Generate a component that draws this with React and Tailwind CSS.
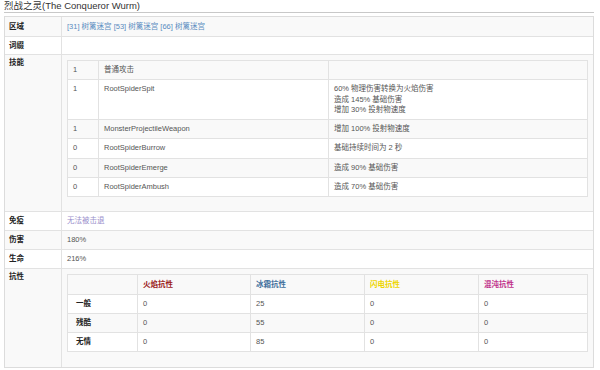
import React from "react";

const FONT = "font-['Liberation_Sans','Noto_Sans_CJK_SC',sans-serif]";

const skills = [
  { lv: "1", name: "普通攻击", desc: [], h: "h-[19px]" },
  { lv: "1", name: "RootSpiderSpit", desc: ["60% 物理伤害转换为火焰伤害", "造成 145% 基础伤害", "增加 30% 投射物速度"], h: "h-[40px]" },
  { lv: "1", name: "MonsterProjectileWeapon", desc: ["增加 100% 投射物速度"], h: "h-[19px]" },
  { lv: "0", name: "RootSpiderBurrow", desc: ["基础持续时间为 2 秒"], h: "h-[20px]" },
  { lv: "0", name: "RootSpiderEmerge", desc: ["造成 90% 基础伤害"], h: "h-[19px]" },
  { lv: "0", name: "RootSpiderAmbush", desc: ["造成 70% 基础伤害"], h: "h-[18px]" },
];

const resists = [
  { label: "一般", v: ["0", "25", "0", "0"], h: "h-[19px]" },
  { label: "残酷", v: ["0", "55", "0", "0"], h: "h-[19px]" },
  { label: "无情", v: ["0", "85", "0", "0"], h: "h-[18px]" },
];

function OuterRow({ label, children, gray, last, h = "", padClass = "py-[5px]", labelPad }) {
  return (
    <div className={`grid grid-cols-[57px_1fr] overflow-hidden ${h} ${last ? "" : "border-b border-[#e2e2e2]"} ${gray ? "bg-[#f9f9f9]" : "bg-white"}`}>
      <div className={`border-r border-[#e2e2e2] px-[4px] ${labelPad || padClass} font-bold text-[#222]`}>{label}</div>
      <div className={`px-[5px] ${padClass}`}>{children}</div>
    </div>
  );
}

export default function App() {
  return (
    <div className={`${FONT} w-[600px] h-[370px] bg-white text-[7.5px] leading-[10px] text-[#555] pl-[4px] pr-[6px] overflow-hidden`}>
      <div className="text-[9.5px] leading-[12px] text-[#333] border-b border-[#c8c8c8] h-[13px]">
        烈战之灵(The Conqueror Wurm)
      </div>
      <div className="mt-[3px] border border-[#dcdcdc] w-[590px]">
        <OuterRow label="区域" gray h="h-[20px]" padClass="py-[4.5px]">
          <span className="text-[#5a8cc0]">[31] 树篱迷宫 [53] 树篱迷宫 [66] 树篱迷宫</span>
        </OuterRow>
        <OuterRow label="词缀" h="h-[18px]" padClass="py-[4px]">
          <span>&nbsp;</span>
        </OuterRow>
        <OuterRow label="技能" gray padClass="pt-[5px] pb-[14px]" labelPad="pt-[3px]">
          <div className="border border-[#e2e2e2] bg-white">
            {skills.map((s, i) => (
              <div
                key={i}
                className={`grid grid-cols-[31px_230px_1fr] overflow-hidden ${s.h} ${i < skills.length - 1 ? "border-b border-[#e2e2e2]" : ""} ${i % 2 === 0 ? "bg-[#f9f9f9]" : "bg-white"}`}
              >
                <div className="border-r border-[#e2e2e2] px-[5px] py-[4px]">{s.lv}</div>
                <div className="border-r border-[#e2e2e2] px-[5px] py-[4px]">{s.name}</div>
                <div className="px-[5px] py-[4px]">
                  {s.desc.length === 0 ? <span>&nbsp;</span> : s.desc.map((d, j) => <div key={j} className="leading-[10.5px]">{d}</div>)}
                </div>
              </div>
            ))}
          </div>
        </OuterRow>
        <OuterRow label="免疫" h="h-[19px]" padClass="py-[4px]">
          <span className="text-[#9a8fcc]">无法被击退</span>
        </OuterRow>
        <OuterRow label="伤害" gray h="h-[19px]" padClass="py-[4px]">
          180%
        </OuterRow>
        <OuterRow label="生命" h="h-[19px]" padClass="py-[4px]">
          216%
        </OuterRow>
        <OuterRow label="抗性" gray last padClass="pt-[5px] pb-[15px]" labelPad="pt-[3px]">
          <div className="border border-[#e2e2e2] bg-white">
            <div className="grid grid-cols-[70px_113px_114px_114px_1fr] h-[20px] overflow-hidden border-b border-[#e2e2e2] bg-[#f9f9f9]">
              <div className="border-r border-[#e2e2e2] px-[5px] py-[4.5px]">&nbsp;</div>
              <div className="border-r border-[#e2e2e2] px-[5px] py-[4.5px] font-bold text-[#9b2020]">火焰抗性</div>
              <div className="border-r border-[#e2e2e2] px-[5px] py-[4.5px] font-bold text-[#3f6f9c]">冰霜抗性</div>
              <div className="border-r border-[#e2e2e2] px-[5px] py-[4.5px] font-bold text-[#eed500]">闪电抗性</div>
              <div className="px-[5px] py-[4.5px] font-bold text-[#c0308a]">混沌抗性</div>
            </div>
            {resists.map((r, i) => (
              <div
                key={i}
                className={`grid grid-cols-[70px_113px_114px_114px_1fr] overflow-hidden ${r.h} ${i < resists.length - 1 ? "border-b border-[#e2e2e2]" : ""} ${i % 2 === 1 ? "bg-[#f9f9f9]" : "bg-white"}`}
              >
                <div className="border-r border-[#e2e2e2] pl-[8px] pr-[5px] py-[4px] font-bold text-[#222]">{r.label}</div>
                {r.v.map((v, j) => (
                  <div key={j} className={`${j < 3 ? "border-r border-[#e2e2e2]" : ""} px-[5px] py-[4px]`}>{v}</div>
                ))}
              </div>
            ))}
          </div>
        </OuterRow>
      </div>
    </div>
  );
}
